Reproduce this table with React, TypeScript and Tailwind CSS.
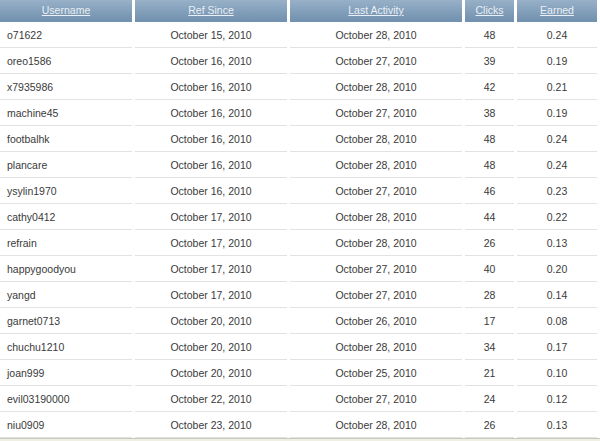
import React from 'react';

const rows = [
  ['o71622', 'October 15, 2010', 'October 28, 2010', '48', '0.24'],
  ['oreo1586', 'October 16, 2010', 'October 27, 2010', '39', '0.19'],
  ['x7935986', 'October 16, 2010', 'October 28, 2010', '42', '0.21'],
  ['machine45', 'October 16, 2010', 'October 27, 2010', '38', '0.19'],
  ['footbalhk', 'October 16, 2010', 'October 28, 2010', '48', '0.24'],
  ['plancare', 'October 16, 2010', 'October 28, 2010', '48', '0.24'],
  ['ysylin1970', 'October 16, 2010', 'October 27, 2010', '46', '0.23'],
  ['cathy0412', 'October 17, 2010', 'October 28, 2010', '44', '0.22'],
  ['refrain', 'October 17, 2010', 'October 28, 2010', '26', '0.13'],
  ['happygoodyou', 'October 17, 2010', 'October 27, 2010', '40', '0.20'],
  ['yangd', 'October 17, 2010', 'October 27, 2010', '28', '0.14'],
  ['garnet0713', 'October 20, 2010', 'October 26, 2010', '17', '0.08'],
  ['chuchu1210', 'October 20, 2010', 'October 28, 2010', '34', '0.17'],
  ['joan999', 'October 20, 2010', 'October 25, 2010', '21', '0.10'],
  ['evil03190000', 'October 22, 2010', 'October 27, 2010', '24', '0.12'],
  ['niu0909', 'October 23, 2010', 'October 28, 2010', '26', '0.13'],
];

const headers = ['Username', 'Ref Since', 'Last Activity', 'Clicks', 'Earned'];

const App = () => {
  return (
    <div className="w-[600px] h-[441px] bg-white overflow-hidden font-['Liberation_Sans',Arial,sans-serif]">
      <div className="grid grid-cols-[132px_152px_172px_49px_80px] gap-x-[3px]">
        {/* Header */}
        {headers.map((h) => (
          <div
            key={h}
            className="h-[22px] flex items-center justify-center bg-gradient-to-b from-[#97b0c7] to-[#7090ae]"
          >
            <a href="#" className="text-[10.5px] text-[#e9eff5] underline">
              {h}
            </a>
          </div>
        ))}

        {/* Rows */}
        {rows.map((r) =>
          r.map((cell, i) => (
            <div
              key={r[0] + i}
              className={`h-[26px] flex items-center pt-[2px] border-b border-[#e2e2e2] text-[10.5px] text-[#3a3a3a] ${
                i === 0 ? 'pl-[7px]' : 'justify-center'
              }`}
            >
              {cell}
            </div>
          ))
        )}
      </div>
      <div className="h-[4px] border-t border-[#c9c9c0] bg-[#f0efe4]" />
    </div>
  );
};

export default App;
